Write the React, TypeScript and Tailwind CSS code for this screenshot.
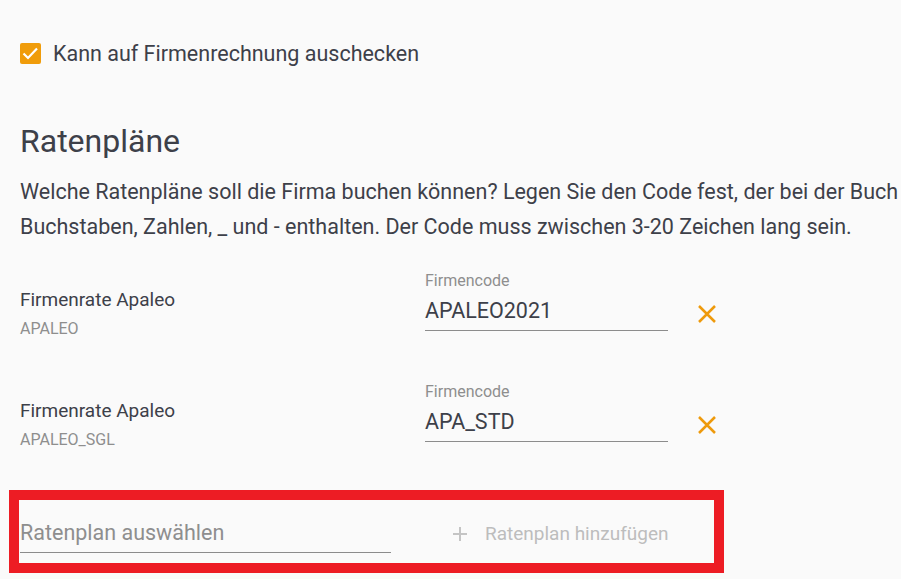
import React from "react";

function XIcon() {
  return (
    <svg width="20" height="20" viewBox="0 0 20 20" className="block">
      <path d="M2 2 L18 18 M18 2 L2 18" stroke="#ee9a0c" strokeWidth="2.5" fill="none" />
    </svg>
  );
}

function PlusIcon() {
  return (
    <svg width="16" height="16" viewBox="0 0 16 16" className="block">
      <path d="M8 1 V15 M1 8 H15" stroke="#c4c4c4" strokeWidth="2" fill="none" />
    </svg>
  );
}

function RateRow({ title, code, value, className }: { title: string; code: string; value: string; className?: string }) {
  return (
    <div className={"flex h-[60px] " + (className ?? "")}>
      <div className="w-[425px] pl-[20px] pt-[17px]">
        <div className="text-[19px] leading-[24px] text-[#3d4049] whitespace-nowrap">{title}</div>
        <div className="mt-[7px] text-[16px] leading-[20px] text-[#8e8e8e] whitespace-nowrap">{code}</div>
      </div>
      <div className="w-[243px]">
        <div className="text-[16px] leading-[20px] text-[#8e8e8e]">Firmencode</div>
        <div className="mt-[5px] pb-[4px] border-b border-[#8c8c8c] text-[21.5px] leading-[30px] text-[#3d4049]">{value}</div>
      </div>
      <div className="ml-[29px] pt-[33px]">
        <XIcon />
      </div>
    </div>
  );
}

export default function App() {
  return (
    <div
      className="w-[901px] h-[579px] overflow-hidden bg-[#fafafa]"
      style={{ fontFamily: "Roboto, 'Noto Sans', sans-serif" }}
    >
      <div className="pt-[43px] pl-[20px] flex items-center h-[64px]">
        <div className="w-[21px] h-[21px] rounded-[2px] bg-[#f09c0a] flex items-center justify-center">
          <svg width="21" height="21" viewBox="0 0 21 21" className="block">
            <path d="M3.5 10.5 L8 15 L17 5.5" stroke="#ffffff" strokeWidth="2.2" fill="none" />
          </svg>
        </div>
        <div className="ml-[12px] text-[21.5px] leading-[24px] text-[#3d4049] whitespace-nowrap">
          Kann auf Firmenrechnung auschecken
        </div>
      </div>

      <div className="mt-[57px] pl-[20px] text-[32px] leading-[40px] text-[#3d4049]">Ratenpläne</div>

      <div className="mt-[13px] pl-[20px] text-[21.5px] leading-[35px] text-[#3d4049] whitespace-nowrap overflow-hidden">
        <div>Welche Ratenpläne soll die Firma buchen können? Legen Sie den Code fest, der bei der Buch</div>
        <div>Buchstaben, Zahlen, _ und - enthalten. Der Code muss zwischen 3-20 Zeichen lang sein.</div>
      </div>

      <RateRow className="mt-[27px]" title="Firmenrate Apaleo" code="APALEO" value="APALEO2021" />
      <RateRow className="mt-[51px]" title="Firmenrate Apaleo" code="APALEO_SGL" value="APA_STD" />

      <div className="mt-[48px] ml-[9px] w-[715px] h-[83px] border-[10px] border-[#ed1c24] flex">
        <div className="ml-[1px] mt-[18px] w-[371px] h-[35px] border-b border-[#8c8c8c] text-[21.5px] leading-[30px] text-[#8e8e8e] whitespace-nowrap">
          Ratenplan auswählen
        </div>
        <div className="ml-[61px] mt-[25px] flex items-center h-[18px]">
          <PlusIcon />
          <span className="ml-[17px] text-[19px] leading-[20px] text-[#bdbdbd] whitespace-nowrap">Ratenplan hinzufügen</span>
        </div>
      </div>
    </div>
  );
}
